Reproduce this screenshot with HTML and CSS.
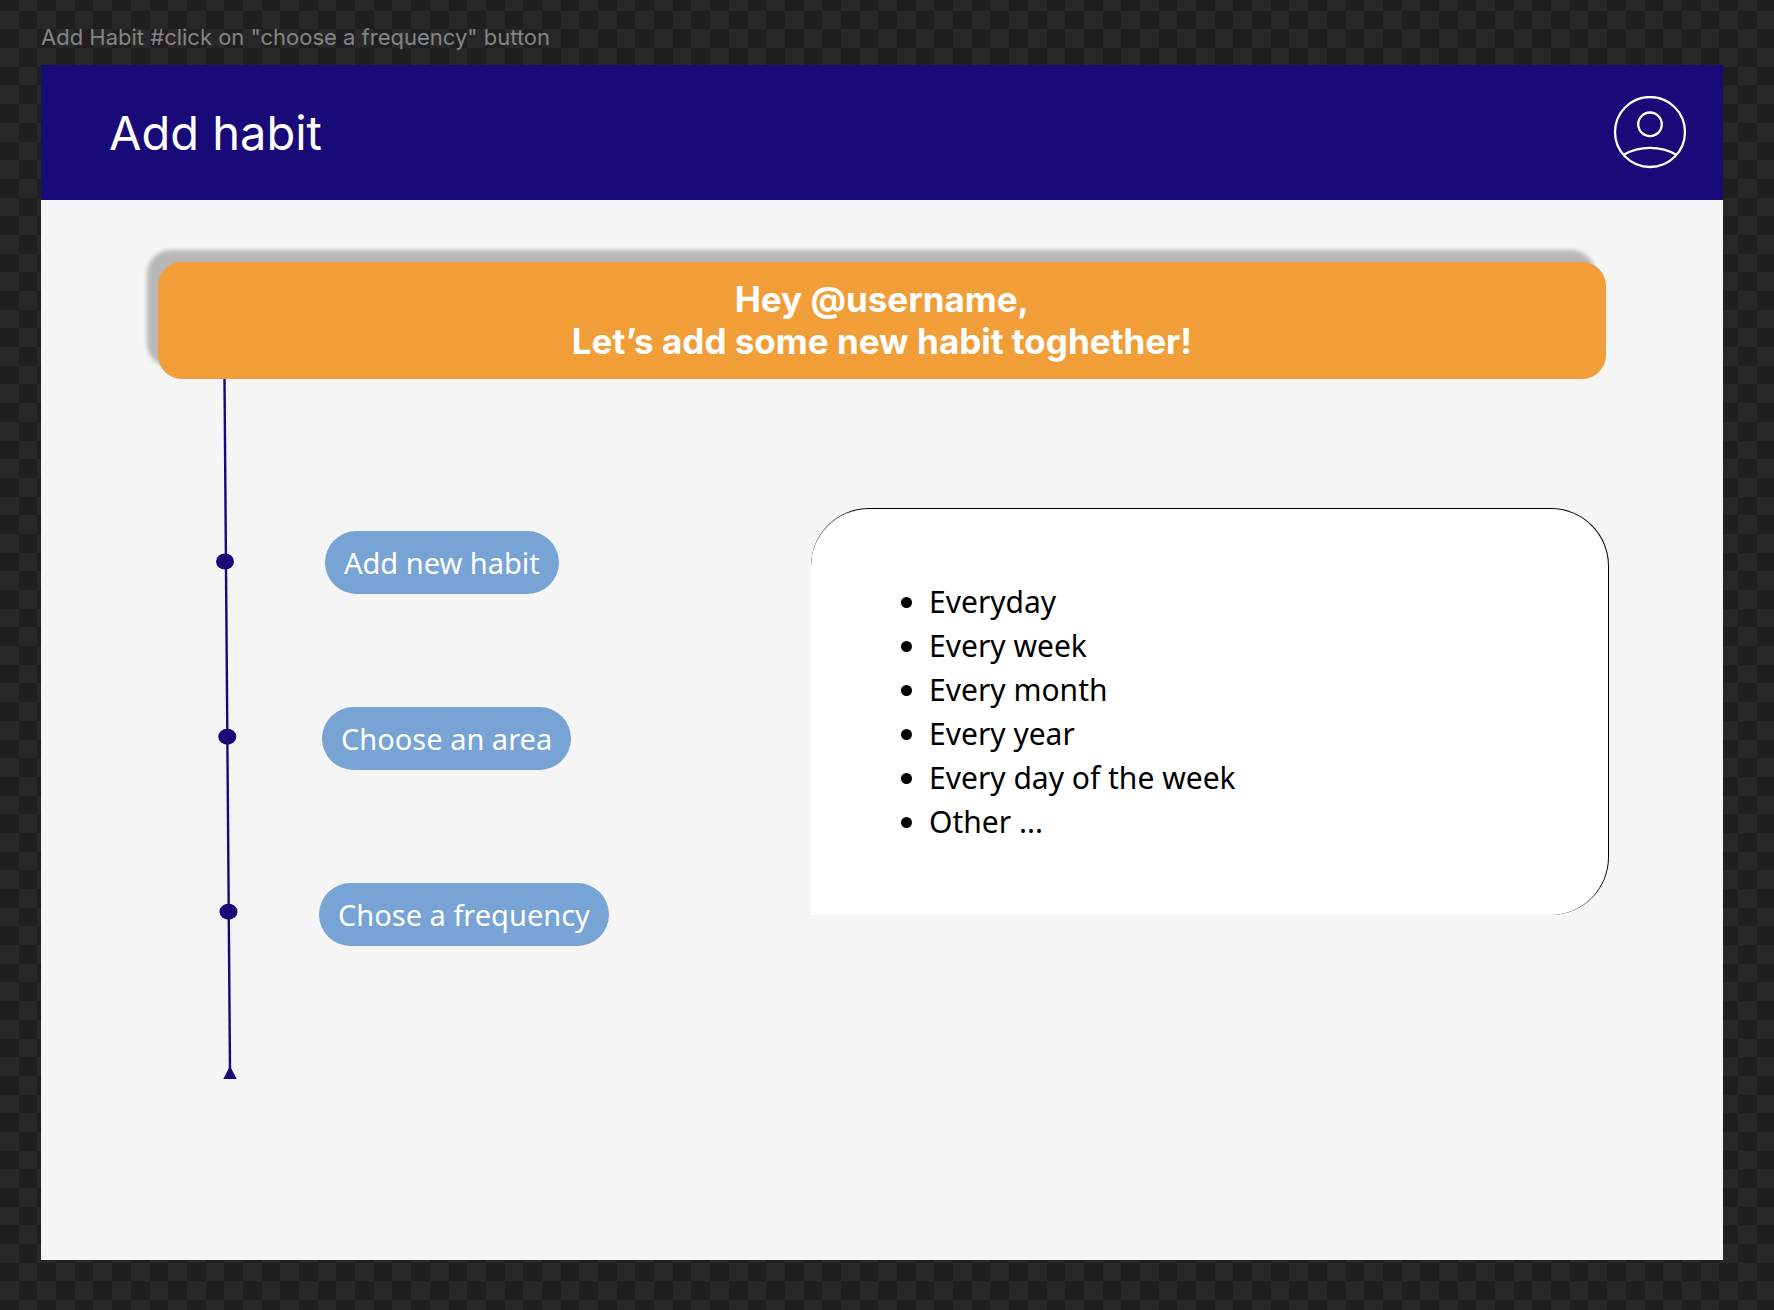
FILE: index.html
```html
<!DOCTYPE html>
<html lang="en">
<head>
  <meta charset="utf-8">
  <meta name="viewport" content="width=device-width, initial-scale=1">
  <title>Add habit</title>
  <link rel="stylesheet" href="styles.css">
</head>
<body class="canvas">
  <p class="frame-label">Add Habit #click on "choose a frequency" button</p>
  <div class="frame">
    <header class="topbar">
      <h1 class="topbar-title">Add habit</h1>
      <button class="avatar" type="button" aria-label="Profile">
        <svg class="avatar-icon" viewBox="0 0 74 74" fill="none" stroke="currentColor" stroke-width="2.3" aria-hidden="true">
          <circle cx="37" cy="36" r="35"/>
          <circle cx="37" cy="28.3" r="11.8"/>
          <path d="M10.8 58.8C26 49.600 48 49.600 63.2 58.8"/>
        </svg>
      </button>
    </header>
    <main class="content">
      <h2 class="banner">Hey @username,<br>Let’s add some new habit toghether!</h2>
      <div class="workspace">
        <div class="planner">
          <svg class="timeline" viewBox="0 0 24 701" fill="currentColor" aria-hidden="true">
            <path d="M9.5 0L15 692" stroke="currentColor" stroke-width="2.4"/>
            <ellipse cx="10" cy="182.500" rx="9" ry="8"/>
            <ellipse cx="12.300" cy="357.700" rx="9" ry="8"/>
            <ellipse cx="13.500" cy="532.700" rx="9" ry="8"/>
            <path d="M15 687L21.700 700H8.300Z"/>
          </svg>
          <ol class="steps">
            <li class="step"><button class="pill" type="button">Add new habit</button></li>
            <li class="step"><button class="pill" type="button">Choose an area</button></li>
            <li class="step"><button class="pill" type="button">Chose a frequency</button></li>
          </ol>
        </div>
        <section class="card" aria-label="Frequency">
          <ul class="options">
            <li>Everyday</li>
            <li>Every week</li>
            <li>Every month</li>
            <li>Every year</li>
            <li>Every day of the week</li>
            <li>Other ...</li>
          </ul>
        </section>
      </div>
    </main>
  </div>
</body>
</html>
```
FILE: styles.css
```css
:root {
  --navy: #180a78;
  --orange: #f19e38;
  --blue: #77a4d5;
  --paper: #f5f5f5;
}

* {
  box-sizing: border-box;
}

.canvas {
  display: flex;
  flex-direction: column;
  min-height: 100vh;
  margin: 0;
  padding: 22px 51px 50px 41px;
  background-color: #1f1f1f;
  /* 16 by 16 checkerboard, repeated over the canvas */
  background-image: url("data:image/svg+xml,%3Csvg xmlns='http://www.w3.org/2000/svg' width='299' height='299' viewBox='0 0 16 16' shape-rendering='crispEdges'%3E%3Cpath stroke='%23282828' stroke-dasharray='1' d='M1 .5h15M0 1.500h16M1 2.500h15M0 3.500h16M1 4.500h15M0 5.500h16M1 6.500h15M0 7.500h16M1 8.500h15M0 9.500h16M1 10.500h15M0 11.500h16M1 12.500h15M0 13.500h16M1 14.500h15M0 15.500h16'/%3E%3C/svg%3E");
  background-position: 0 -8px;
  background-size: 299px 299px;
  font-family: Inter, "Liberation Sans", sans-serif;
}

.frame-label {
  margin: 0 0 13px;
  color: #858585;
  font-size: 22px;
  line-height: 30px;
}

.frame {
  display: flex;
  flex: 1;
  flex-direction: column;
  background: var(--paper);
}

.topbar {
  display: flex;
  align-items: center;
  justify-content: space-between;
  min-height: 135px;
  padding: 0 36px 0 68px;
  background: var(--navy);
  color: #fff;
}

.topbar-title {
  margin: 0;
  font-size: 47px;
  font-weight: 400;
  line-height: 60px;
}

.avatar {
  display: flex;
  padding: 0;
  border: 0;
  border-radius: 50%;
  background: none;
  color: inherit;
  cursor: pointer;
}

.avatar-icon {
  width: 74px;
  height: 74px;
}

.content {
  padding: 62px 114px;
}

.banner {
  margin: 0 3px;
  padding: 16px 24px 17px;
  border-radius: 24px;
  background: var(--orange);
  box-shadow: -11px -12px 4px rgba(0, 0, 0, 0.25);
  color: #fff;
  font-size: 35px;
  font-weight: 700;
  line-height: 42px;
  text-align: center;
}

.workspace {
  display: grid;
  grid-template-columns: 37fr 45fr;
  align-items: start;
}

.planner {
  display: flex;
  gap: 80px;
  padding-left: 60px;
}

.timeline {
  flex: none;
  width: 24px;
  height: 701px;
  color: var(--navy);
}

.steps {
  display: flex;
  flex-direction: column;
  gap: 113px;
  margin: 0;
  padding: 152px 0 0;
  list-style: none;
}

/* the steps fan out to the left as they go down */
.step:nth-child(1) {
  padding-left: 6px;
}

.step:nth-child(2) {
  padding-left: 3px;
}

.pill {
  display: block;
  height: 63px;
  padding: 0 19px;
  border: 0;
  border-radius: 32px;
  background: var(--blue);
  color: #fff;
  font-family: "Noto Sans", "Open Sans", sans-serif;
  font-size: 29px;
  line-height: 44px;
  white-space: nowrap;
  cursor: pointer;
}

.card {
  margin-top: 129px;
  padding: 71px 40px 71px 118px;
  border-top: 1px solid #000;
  border-right: 1px solid #000;
  border-radius: 58px 58px 58px 0;
  background: #fff;
}

.options {
  margin: 0;
  padding: 0;
  color: #000;
  font-family: "Noto Sans", "Open Sans", sans-serif;
  font-size: 30px;
  line-height: 44px;
}
```
